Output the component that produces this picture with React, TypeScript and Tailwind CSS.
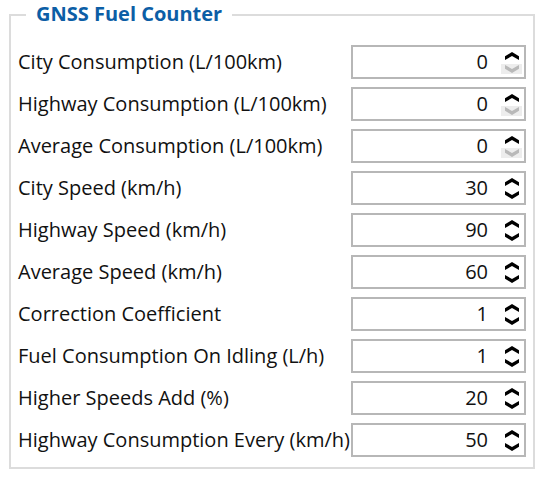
import React from "react";

const rows: { label: string; value: string; downDisabled?: boolean }[] = [
  { label: "City Consumption (L/100km)", value: "0", downDisabled: true },
  { label: "Highway Consumption (L/100km)", value: "0", downDisabled: true },
  { label: "Average Consumption (L/100km)", value: "0", downDisabled: true },
  { label: "City Speed (km/h)", value: "30" },
  { label: "Highway Speed (km/h)", value: "90" },
  { label: "Average Speed (km/h)", value: "60" },
  { label: "Correction Coefficient", value: "1" },
  { label: "Fuel Consumption On Idling (L/h)", value: "1" },
  { label: "Higher Speeds Add (%)", value: "20" },
  { label: "Highway Consumption Every (km/h)", value: "50" },
];

function Chevron({ up, color }: { up?: boolean; color: string }) {
  return (
    <svg width="14" height="8" viewBox="0 0 14 8" className="block shrink-0">
      <polygon
        points={
          up
            ? "7,0 14,4.2 14,8 7,4 0,8 0,4.2"
            : "7,8 14,3.8 14,0 7,4 0,0 0,3.8"
        }
        fill={color}
      />
    </svg>
  );
}

export default function App() {
  return (
    <div
      className="w-[541px] h-[477px] bg-white pt-[14px] pl-[9px]"
      style={{ fontFamily: '"Open Sans", "Noto Sans", sans-serif' }}
    >
      <div className="relative w-[526px] h-[455px] border-2 border-[#dcdcdc] pt-[29px] pl-[7px] pr-[7px]">
        <div className="absolute left-[15px] top-[-15px] bg-white px-[10px] text-[20px] leading-[26px] font-bold text-[#0c5ea6]">
          GNSS Fuel Counter
        </div>
        <div className="flex flex-col gap-[8px]">
          {rows.map((r) => (
            <div key={r.label} className="flex items-center h-[34px]">
              <div className="flex-1 whitespace-nowrap text-[20px] text-[#111]">
                {r.label}
              </div>
              <div className="relative w-[175px] h-[34px] border-2 border-[#b7b7b7] bg-white flex items-center justify-end pr-[36px]">
                <span className="text-[20px] text-[#111]">{r.value}</span>
                <div className="absolute right-[2px] top-0 bottom-0 w-[21px] flex flex-col">
                  <div className="h-[17px] pt-[5px] flex justify-center">
                    <Chevron up color="#000" />
                  </div>
                  <div
                    className={
                      "h-[10px] flex items-center justify-center " +
                      (r.downDisabled ? "bg-[#ededed]" : "")
                    }
                  >
                    <Chevron color={r.downDisabled ? "#b9b9b9" : "#000"} />
                  </div>
                </div>
              </div>
            </div>
          ))}
        </div>
      </div>
    </div>
  );
}
